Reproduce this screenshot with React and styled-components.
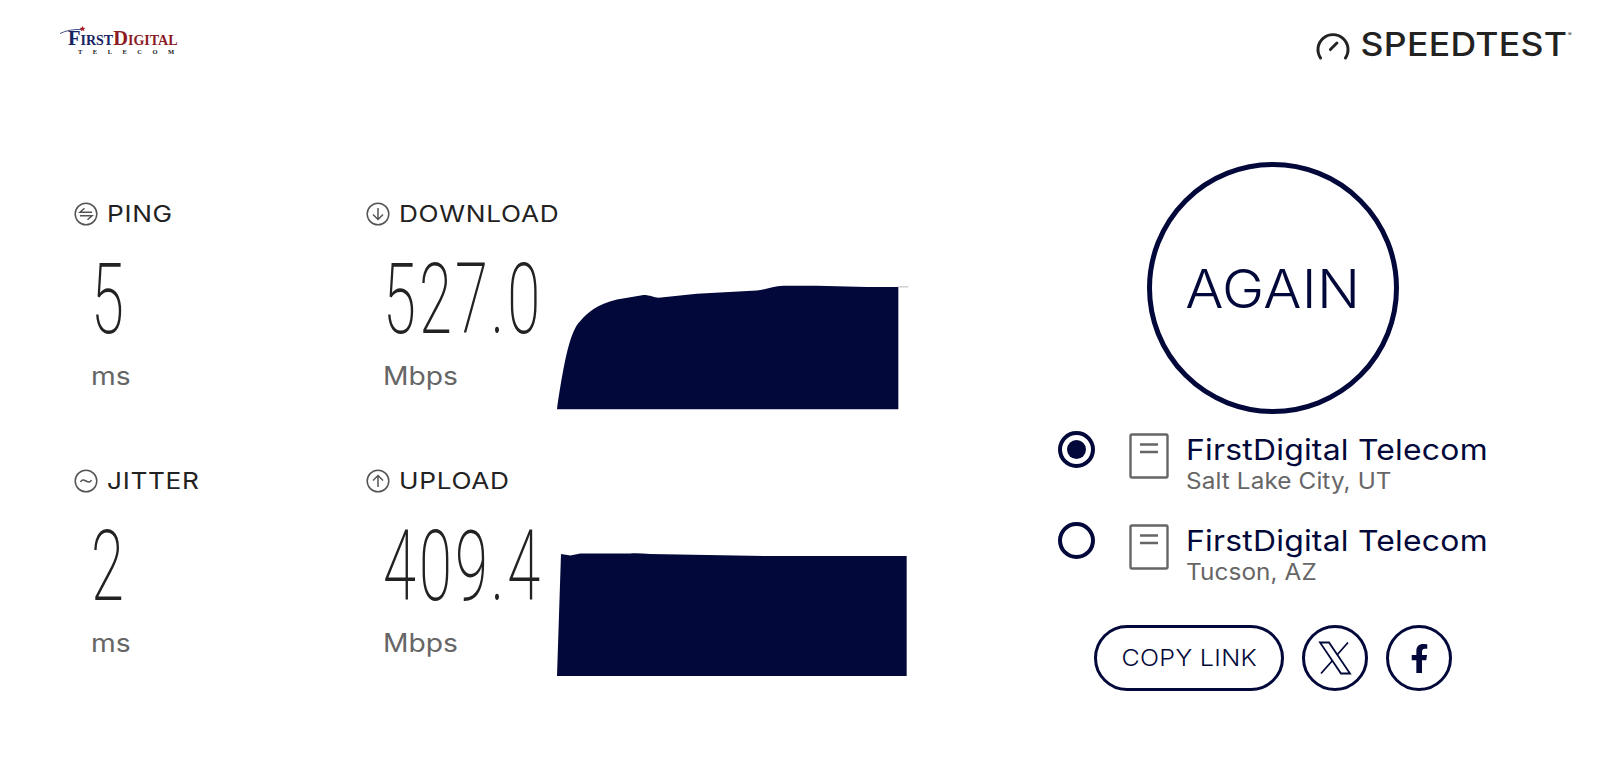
import React from 'react';
import styled, { createGlobalStyle } from 'styled-components';
import { FaFacebookF } from 'react-icons/fa';

const navy = '#03083a';
const grey = '#666666';
const sans = '"Inter", "Open Sans", sans-serif';

const GlobalStyle = createGlobalStyle`
  html, body {
    margin: 0;
    padding: 0;
    background: #ffffff;
    font-family: ${sans};
  }
  * {
    box-sizing: border-box;
  }
`;

const Page = styled.div`
  width: 1600px;
  height: 771px;
  overflow: hidden;
  background: #ffffff;
`;

const Header = styled.header`
  display: flex;
  justify-content: space-between;
  align-items: flex-start;
  height: 163px;
  padding: 26px 33px 0 60px;
`;

const Logo = styled.div`
  display: flex;
  flex-direction: column;
  position: relative;
  width: 125px;
  padding: 5px 0 0 8px;
  font-family: "Liberation Serif", serif;
  font-weight: 700;
`;

const Swoosh = styled.svg`
  position: absolute;
  left: 0;
  top: 0;
`;

const LogoName = styled.div`
  display: flex;
  font-size: 20.5px;
  line-height: 15px;
  font-variant: small-caps;
`;

const LogoWord = styled.span`
  color: ${(p) => p.color};
`;

const LogoSub = styled.div`
  margin: 2px 0 0 10px;
  font-size: 6.5px;
  line-height: 7px;
  letter-spacing: 10.5px;
  color: #222222;
  white-space: nowrap;
`;

const Brand = styled.div`
  display: flex;
  align-items: center;
  gap: 30px;
  height: 34px;
  margin-top: 2px;
  color: #222222;
`;

const BrandName = styled.div`
  position: relative;
  font-size: 32px;
  font-weight: 500;
  letter-spacing: 0.3px;
  line-height: 34px;
  transform: scaleX(1.11);
  transform-origin: right center;
`;

const Registered = styled.span`
  position: absolute;
  top: 4px;
  right: -4px;
  font-size: 5px;
  line-height: 5px;
  letter-spacing: 0;
`;

const Main = styled.main`
  display: flex;
`;

const Metrics = styled.section`
  display: flex;
  flex-direction: column;
  gap: 79px;
  width: 984px;
  margin: 40px 0 0 74px;
`;

const MetricRow = styled.div`
  display: flex;
`;

const Metric = styled.div`
  display: flex;
  flex-direction: column;
  width: ${(p) => p.width}px;
`;

const Label = styled.div`
  display: flex;
  align-items: center;
  gap: 9px;
  height: 22px;
  font-size: 23px;
  letter-spacing: 0.6px;
  color: #222222;
`;

const LabelText = styled.span`
  transform: scaleX(1.14);
  transform-origin: left center;
`;

const LabelIcon = styled.svg`
  width: 24px;
  height: 24px;
  flex: none;
`;

const MetricBody = styled.div`
  display: flex;
  align-items: flex-end;
`;

const Reading = styled.div`
  display: flex;
  flex-direction: column;
  width: 191px;
  padding-left: 17px;
`;

const Value = styled.div`
  height: 70px;
  margin-top: 40px;
  font-family: "Roboto", sans-serif;
  font-weight: 200;
  font-size: 98px;
  letter-spacing: 5px;
  line-height: 70px;
  color: #222222;
  white-space: nowrap;
  transform: scaleX(0.61);
  transform-origin: left center;
`;

const Unit = styled.div`
  margin-top: 26px;
  font-size: 25px;
  line-height: 30px;
  color: ${grey};
  transform: scaleX(1.13);
  transform-origin: left center;
`;

const Chart = styled.svg`
  display: block;
  flex: none;
  margin-bottom: ${(p) => p.lift}px;
`;

const Panel = styled.section`
  display: flex;
  flex-direction: column;
  align-items: flex-start;
  width: 440px;
`;

const AgainButton = styled.button`
  display: flex;
  align-items: center;
  justify-content: center;
  align-self: center;
  width: 252px;
  height: 252px;
  margin: -1px 0 0 -10px;
  padding: 2px 0 0;
  border: 5px solid ${navy};
  border-radius: 50%;
  background: #ffffff;
  color: ${navy};
  font-family: ${sans};
  font-size: 53px;
  font-weight: 300;
  letter-spacing: 0.3px;
`;

const ButtonText = styled.span`
  display: inline-block;
  transform: scaleX(${(p) => p.$stretch});
`;

const ServerList = styled.div`
  display: flex;
  flex-direction: column;
  gap: 34px;
  margin-top: 19px;
`;

const Server = styled.div`
  display: flex;
  align-items: flex-start;
  height: 57px;
`;

const Radio = styled.div`
  display: flex;
  align-items: center;
  justify-content: center;
  width: 37px;
  height: 37px;
  margin-top: -2px;
  border: 4px solid ${navy};
  border-radius: 50%;
`;

const RadioDot = styled.div`
  width: 19px;
  height: 19px;
  border-radius: 50%;
  background: ${navy};
`;

const DocIcon = styled.svg`
  width: 40px;
  height: 46px;
  margin-left: 34px;
  flex: none;
`;

const ServerText = styled.div`
  display: flex;
  flex-direction: column;
  margin-left: 17px;
`;

const ServerName = styled.div`
  font-size: 29px;
  line-height: 34px;
  letter-spacing: 0.2px;
  color: ${navy};
  white-space: nowrap;
  transform: scaleX(1.1);
  transform-origin: left center;
`;

const ServerCity = styled.div`
  font-size: 22.5px;
  line-height: 28px;
  letter-spacing: 0.1px;
  color: ${grey};
  white-space: nowrap;
  transform: scaleX(1.08);
  transform-origin: left center;
`;

const Actions = styled.div`
  display: flex;
  gap: 18px;
  margin: 44px 0 0 36px;
`;

const CopyButton = styled.button`
  width: 190px;
  height: 66px;
  padding: 0;
  border: 3px solid ${navy};
  border-radius: 33px;
  background: #ffffff;
  color: ${navy};
  font-family: ${sans};
  font-size: 23px;
  font-weight: 300;
  letter-spacing: 0.3px;
`;

const ShareButton = styled.button`
  display: flex;
  align-items: center;
  justify-content: center;
  width: 66px;
  height: 66px;
  padding: 0;
  border: 3px solid ${navy};
  border-radius: 50%;
  background: #ffffff;
  color: ${navy};
`;

const PingIcon = () => (
  <LabelIcon viewBox="0 0 24 24" fill="none" stroke="#555" strokeWidth="1.5">
    <circle cx="12" cy="12" r="10.8" />
    <path d="M18 10.200H6l4.500-4M6 13.800h12l-4.500 4" />
  </LabelIcon>
);

const JitterIcon = () => (
  <LabelIcon viewBox="0 0 24 24" fill="none" stroke="#555" strokeWidth="1.5">
    <circle cx="12" cy="12" r="10.8" />
    <path d="M6.500 13c1.200-2.400 3-2.600 5.500-1s4.300 1.400 5.500-1" />
  </LabelIcon>
);

const ArrowIcon = ({ up }) => (
  <LabelIcon viewBox="0 0 24 24" fill="none" stroke="#555" strokeWidth="1.5">
    <circle cx="12" cy="12" r="10.8" />
    <path d={up ? 'M12 18V6.500M7 11.500l5-5 5 5' : 'M12 6v11.500M7 12.500l5 5 5-5'} />
  </LabelIcon>
);

const ServerIcon = () => (
  <DocIcon viewBox="0 0 40 46" fill="none" stroke={grey} strokeWidth="2.4">
    <rect x="1.500" y="1.500" width="37" height="43" rx="1.500" />
    <path d="M11 11.500h18M11 19h18" />
  </DocIcon>
);

const App = () => (
  <Page>
    <GlobalStyle />
    <Header>
      <Logo>
        <Swoosh width="40" height="16" viewBox="0 0 40 16" fill="none">
          <path d="M0 7.500C6 4.500 14 3 22 3.500" stroke="#1c2a6b" strokeWidth="0.8" />
          <path d="M22.500 0l0.900 1.800 2 0.200-1.500 1.300 0.500 2-1.900-1-1.800 1 0.400-2-1.500-1.300 2-0.200z" fill="#b01e2a" />
        </Swoosh>
        <LogoName>
          <LogoWord color="#16245f">First</LogoWord>
          <LogoWord color="#8c1a22">Digital</LogoWord>
        </LogoName>
        <LogoSub>TELECOM</LogoSub>
      </Logo>
      <Brand>
        <svg width="36" height="31" viewBox="45 40 110 95" fill="none" stroke="#222" strokeWidth="9" strokeLinecap="round">
          <path d="M62 126A46 46 0 1 1 138 126" />
          <path d="M92 100L112 80" />
        </svg>
        <BrandName>SPEEDTEST<Registered>®</Registered></BrandName>
      </Brand>
    </Header>
    <Main>
      <Metrics>
        <MetricRow>
          <Metric width={292}>
            <Label><PingIcon /><LabelText>PING</LabelText></Label>
            <Reading>
              <Value>5</Value>
              <Unit>ms</Unit>
            </Reading>
          </Metric>
          <Metric width={560}>
            <Label><ArrowIcon /><LabelText>DOWNLOAD</LabelText></Label>
            <MetricBody>
              <Reading>
                <Value>527.0</Value>
                <Unit>Mbps</Unit>
              </Reading>
              <Chart width="353" height="130" viewBox="20 30 1060 390" lift={-20}>
                <path
                  d="M20 415C30 340 45 260 55 225C65 190 75 165 90 150C110 125 140 100 200 85L280 72C300 72 310 80 325 80L440 68L620 58C650 55 670 45 700 44L800 44L950 48L1045 48L1045 415Z"
                  fill={navy}
                />
                <path d="M1045 47.500H1075" stroke="#bbbbbb" strokeWidth="3" />
              </Chart>
            </MetricBody>
          </Metric>
        </MetricRow>
        <MetricRow>
          <Metric width={292}>
            <Label><JitterIcon /><LabelText>JITTER</LabelText></Label>
            <Reading>
              <Value>2</Value>
              <Unit>ms</Unit>
            </Reading>
          </Metric>
          <Metric width={560}>
            <Label><ArrowIcon up /><LabelText>UPLOAD</LabelText></Label>
            <MetricBody>
              <Reading>
                <Value>409.4</Value>
                <Unit>Mbps</Unit>
              </Reading>
              <Chart width="353" height="130" viewBox="20 30 1060 390" lift={-22}>
                <path
                  d="M20 408L32 42L60 46L90 40L240 40C260 38 280 41 300 42L650 48L1070 48L1070 408Z"
                  fill={navy}
                />
              </Chart>
            </MetricBody>
          </Metric>
        </MetricRow>
      </Metrics>
      <Panel>
        <AgainButton><ButtonText $stretch={1.07}>AGAIN</ButtonText></AgainButton>
        <ServerList>
          <Server>
            <Radio><RadioDot /></Radio>
            <ServerIcon />
            <ServerText>
              <ServerName>FirstDigital Telecom</ServerName>
              <ServerCity>Salt Lake City, UT</ServerCity>
            </ServerText>
          </Server>
          <Server>
            <Radio />
            <ServerIcon />
            <ServerText>
              <ServerName>FirstDigital Telecom</ServerName>
              <ServerCity>Tucson, AZ</ServerCity>
            </ServerText>
          </Server>
        </ServerList>
        <Actions>
          <CopyButton><ButtonText $stretch={1.09}>COPY LINK</ButtonText></CopyButton>
          <ShareButton>
            <svg width="36" height="36" viewBox="0 0 36 36" fill="none" stroke={navy}>
              <path d="M3 2.500H12L33 33.500H24Z" strokeWidth="1.800" />
              <path d="M31 2.500L20 15M15.500 20.500L4 33.500" strokeWidth="1.800" />
            </svg>
          </ShareButton>
          <ShareButton><FaFacebookF size={29} /></ShareButton>
        </Actions>
      </Panel>
    </Main>
  </Page>
);

export default App;
